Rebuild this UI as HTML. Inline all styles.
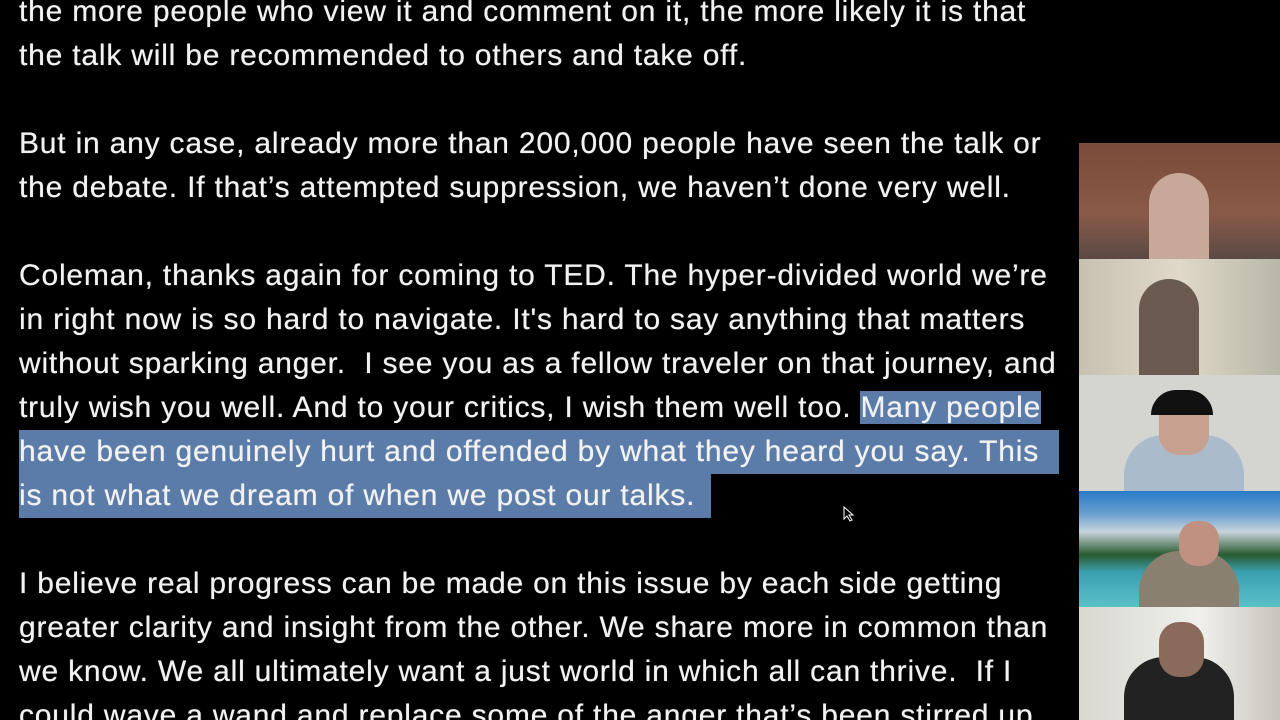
<!DOCTYPE html>
<html style="overflow:hidden"><head><style>
html,body{margin:0;width:1280px;height:720px;overflow:hidden}
body{background:#000;position:relative;font-family:"Liberation Sans",sans-serif;}
.l{position:absolute;left:19px;color:#f2f2f2;font-size:30px;white-space:nowrap;line-height:44px;letter-spacing:0.8px;text-shadow:0 0 0.6px #fff}
.h{background:#5b7ca8}
.t{position:absolute;left:1079px;width:201px;overflow:hidden}
</style></head><body>
<div class="l" style="top:-10px">the more people who view it and comment on it, the more likely it is that</div>
<div class="l" style="top:34px">the talk will be recommended to others and take off.</div>
<div class="l" style="top:122px">But in any case, already more than 200,000 people have seen the talk or</div>
<div class="l" style="top:166px">the debate. If that’s attempted suppression, we haven’t done very well.</div>
<div class="l" style="top:254px">Coleman, thanks again for coming to TED. The hyper-divided world we’re</div>
<div class="l" style="top:298px">in right now is so hard to navigate. It's hard to say anything that matters</div>
<div class="l" style="top:342px">without sparking anger.&nbsp; I see you as a fellow traveler on that journey, and</div>
<div class="l" style="top:386px">truly wish you well. And to your critics, I wish them well too. <span class="h">Many people</span></div>
<div class="l h" style="top:430px;left:19px;width:1040px">have been genuinely hurt and offended by what they heard you say. This</div>
<div class="l h" style="top:474px;left:19px;width:692px">is not what we dream of when we post our talks.</div>
<div class="l" style="top:562px">I believe real progress can be made on this issue by each side getting</div>
<div class="l" style="top:606px">greater clarity and insight from the other. We share more in common than</div>
<div class="l" style="top:650px">we know. We all ultimately want a just world in which all can thrive.&nbsp; If I</div>
<div class="l" style="top:694px">could wave a wand and replace some of the anger that’s been stirred up</div>
<div class="t" style="top:143px;height:116px;background:linear-gradient(180deg,#7a4a3a,#8a5a48 60%,#5a4a44)"><div style="position:absolute;left:70px;top:30px;width:60px;height:86px;background:#c8a898;border-radius:30px 30px 0 0"></div></div>
<div class="t" style="top:259px;height:116px;background:linear-gradient(90deg,#c8c0b0,#e0d8c8 50%,#b8b8a8)"><div style="position:absolute;left:60px;top:20px;width:60px;height:96px;background:#6a5a50;border-radius:30px 30px 0 0"></div></div>
<div class="t" style="top:375px;height:116px;background:#d4d4d0"><div style="position:absolute;left:45px;top:60px;width:120px;height:56px;background:#aabccc;border-radius:40px 40px 0 0"></div><div style="position:absolute;left:80px;top:20px;width:50px;height:60px;background:#c8a090;border-radius:20px"></div><div style="position:absolute;left:72px;top:15px;width:62px;height:25px;background:#111;border-radius:30px 30px 0 0"></div></div>
<div class="t" style="top:491px;height:116px;background:linear-gradient(180deg,#2a7ac8 0,#6aa0d0 20%,#c8d4dc 35%,#2a5a30 55%,#3aa0b0 70%,#5ac0c8)"><div style="position:absolute;left:60px;top:60px;width:100px;height:56px;background:#8a8070;border-radius:40px 40px 0 0"></div><div style="position:absolute;left:100px;top:30px;width:40px;height:45px;background:#c09080;border-radius:18px"></div></div>
<div class="t" style="top:607px;height:113px;background:linear-gradient(90deg,#d8d8d0,#f0f0ec 60%,#c8c4bc)"><div style="position:absolute;left:45px;top:50px;width:110px;height:63px;background:#222;border-radius:40px 40px 0 0"></div><div style="position:absolute;left:80px;top:15px;width:45px;height:55px;background:#8a6a5a;border-radius:20px"></div></div>
<svg style="position:absolute;left:843px;top:506px" width="12" height="16"><path d="M1 1 L1 13 L4 10 L7 15 L9 14 L6 9 L10 9 Z" fill="#000" stroke="#fff" stroke-width="1"/></svg>
</body></html>
